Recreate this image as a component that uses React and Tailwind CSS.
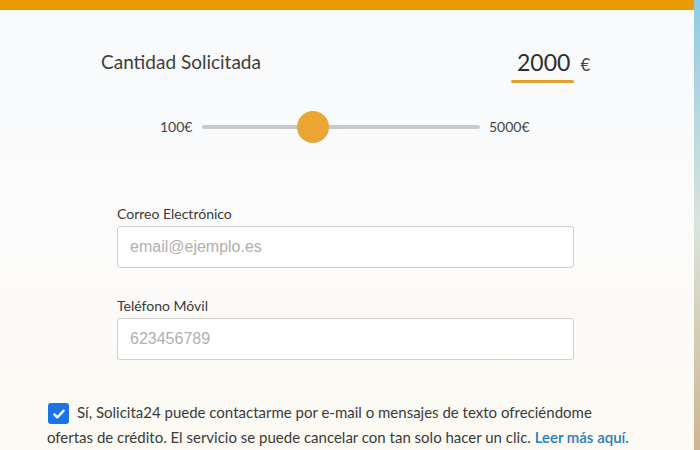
import React from 'react';

export default function App() {
  return (
    <div className="flex w-[700px] h-[450px] overflow-hidden font-['Lato',sans-serif] text-[#3a3a3a]">
      <div className="flex flex-col w-[694px] bg-gradient-to-b from-[#f8fafc] via-[#fbfbfb] to-[#fdfaf3]">
        <div className="h-[10px] bg-[#e89a07]" />

        <div className="flex items-start pl-[101px] pt-[39px]">
          <span className="text-[19px] leading-[26px] text-[#3d3d3d] w-[410px]">Cantidad Solicitada</span>
          <div className="flex flex-col">
            <div className="flex items-baseline gap-[10px] pl-[6px]">
              <span className="text-[23px] leading-[26px] text-[#2d2d2d]">2000</span>
              <span className="text-[17px] text-[#444]">€</span>
            </div>
            <div className="mt-[2px] h-[3px] w-[63px] bg-[#e3a12f] rounded" />
          </div>
        </div>

        <div className="flex items-center pl-[160px] mt-[27px] h-[34px]">
          <span className="text-[14px] text-[#444] w-[42px]">100€</span>
          <div className="relative w-[278px] h-[4px] rounded-full bg-[#c9c9c9]">
            <div className="absolute left-[95px] top-[-14px] w-[32px] h-[32px] rounded-full bg-[#eaa532]" />
          </div>
          <span className="text-[14px] text-[#444] ml-[9px]">5000€</span>
        </div>

        <div className="flex flex-col pl-[117px] mt-[60px]">
          <label className="text-[14px] leading-[20px] text-[#3a3a3a]">Correo Electrónico</label>
          <div className="mt-[2px] h-[42px] w-[457px] border border-[#cfcfcf] rounded-[3px] bg-white flex items-center pl-[12px]">
            <span className="font-['Liberation_Sans',sans-serif] text-[16px] text-[#b0b0b0]">email@ejemplo.es</span>
          </div>
          <label className="mt-[28px] text-[14px] leading-[20px] text-[#3a3a3a]">Teléfono Móvil</label>
          <div className="mt-[2px] h-[42px] w-[457px] border border-[#cfcfcf] rounded-[3px] bg-white flex items-center pl-[12px]">
            <span className="font-['Liberation_Sans',sans-serif] text-[16px] text-[#b0b0b0]">623456789</span>
          </div>
        </div>

        <p className="pl-[47px] w-[632px] mt-[40px] text-[15px] leading-[25px] text-[#3a3a3a]">
          <span className="inline-flex align-[-4px] w-[21px] h-[21px] rounded-[3px] bg-[#1a73e8] items-center justify-center mr-[8px] ml-[1px]">
            <svg viewBox="0 0 24 24" className="w-[16px] h-[16px]" fill="none" stroke="white" strokeWidth="3.5" strokeLinecap="round" strokeLinejoin="round">
              <path d="M5 12.5l4.5 4.5L19 7" />
            </svg>
          </span>
          Sí, Solicita24 puede contactarme por e-mail o mensajes de texto ofreciéndome ofertas de crédito. El servicio se puede cancelar con tan solo hacer un clic. <a className="text-[#2b7bbd] font-semibold">Leer más aquí.</a>
        </p>
      </div>
      <div className="w-[6px] h-full bg-gradient-to-b from-[#8fcbe3] via-[#d9e4dc] to-[#cdb58f]" />
    </div>
  );
}
